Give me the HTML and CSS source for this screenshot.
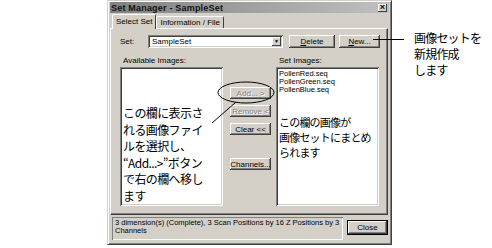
FILE: index.html
```html
<!DOCTYPE html>
<html lang="ja">
<head>
    <meta charset="UTF-8" />
    <title>Set Manager - SampleSet</title>
    <link rel="stylesheet" href="styles.css">
</head>
<body>

<div class="page">
    <!-- ダイアログ本体 -->
    <div class="dialog">
        <div class="titlebar">
            <span class="title">Set Manager - SampleSet</span>
            <span class="close-x">×</span>
        </div>

        <div class="tabs">
            <div class="tab active">Select Set</div>
            <div class="tab">Information / File</div>
        </div>

        <div class="panel">
            <div class="set-row">
                <span class="set-label">Set:</span>
                <div class="combo">
                    <span class="combo-text">SampleSet</span>
                    <span class="combo-btn">▼</span>
                </div>
                <button class="btn btn-delete"><u>D</u>elete</button>
                <button class="btn btn-new"><u>N</u>ew...</button>
            </div>

            <div class="lists">
                <div class="col">
                    <div class="list-label">Available Images:</div>
                    <div class="listbox">
                        <p class="note">この欄に表示さ<br>れる画像ファイ<br>ルを選択し、<br>“Add...>”ボタン<br>で右の欄へ移し<br>ます</p>
                    </div>
                </div>

                <div class="mid">
                    <button class="btn mid-btn disabled">Add... &gt;</button>
                    <button class="btn mid-btn disabled">Remove &lt;</button>
                    <button class="btn mid-btn">Clear &lt;&lt;</button>
                    <button class="btn mid-btn channels">Channels...</button>
                </div>

                <div class="col">
                    <div class="list-label">Set Images:</div>
                    <div class="listbox">
                        <div class="item">PollenRed.seq</div>
                        <div class="item">PollenGreen.seq</div>
                        <div class="item">PollenBlue.seq</div>
                        <p class="note note-right">この欄の画像が<br>画像セットにまとめ<br>られます</p>
                    </div>
                </div>
            </div>
        </div>

        <div class="bottom">
            <div class="status">3 dimension(s) (Complete), 3 Scan Positions by 16 Z Positions by 3 Channels</div>
            <button class="btn btn-close">Close</button>
        </div>
    </div>

    <!-- 右側の説明 -->
    <p class="callout">画像セットを<br>新規作成<br>します</p>
</div>

<!-- 引き出し線と楕円 -->
<svg class="marks" width="492" height="248" viewBox="0 0 492 248">
    <ellipse cx="246" cy="92.5" rx="28" ry="10.5" fill="none" stroke="#000" stroke-width="1"/>
    <line x1="236" y1="102" x2="212" y2="123" stroke="#000" stroke-width="1"/>
    <line x1="373" y1="39.5" x2="404" y2="39.5" stroke="#000" stroke-width="1"/>
</svg>

</body>
</html>
```

FILE: styles.css
```css
body {
    margin: 0;
    background: #fff;
    font-family: "Liberation Sans", Arial, sans-serif;
    font-size: 8px;
    color: #000;
}
.page {
    display: flex;
    align-items: flex-start;
    padding-left: 107px;
}
.dialog {
    width: 285px;
    height: 245px;
    box-sizing: border-box;
    background: #d4d0c8;
    border: 1px solid #404040;
    border-top-color: #d4d0c8;
    border-left-color: #d4d0c8;
    box-shadow: inset 1px 1px #fff, inset -1px -1px #808080;
    padding: 1px 2px;
    display: flex;
    flex-direction: column;
}
.titlebar {
    height: 11px;
    display: flex;
    align-items: center;
    justify-content: space-between;
    background: linear-gradient(to right, #808080, #c0c0c0);
    padding: 0 2px 0 1px;
}
.title {
    font-weight: bold;
    font-size: 9px;
    letter-spacing: 0.2px;
    color: #111;
}
.close-x {
    width: 9px;
    height: 8px;
    line-height: 7px;
    text-align: center;
    font-size: 9px;
    font-weight: bold;
    background: #d4d0c8;
    box-shadow: inset -1px -1px #404040, inset 1px 1px #fff;
}
.tabs {
    display: flex;
    margin-top: 2px;
    padding-left: 2px;
    height: 13px;
    align-items: flex-end;
}
.tab {
    height: 11px;
    line-height: 11px;
    padding: 0 3px;
    border: 1px solid #fff;
    border-bottom: none;
    border-right-color: #404040;
    border-radius: 2px 2px 0 0;
}
.tab.active {
    height: 13px;
    line-height: 13px;
    position: relative;
    z-index: 1;
    background: #d4d0c8;
    margin-bottom: -1px;
    padding: 0 3px 1px;
}
.panel {
    height: 187px;
    box-sizing: border-box;
    border: 1px solid #fff;
    border-right-color: #404040;
    border-bottom-color: #404040;
    box-shadow: inset -1px -1px #808080;
    margin-right: 1px;
    padding: 6px 0 0 9px;
}
.set-row {
    display: flex;
    align-items: center;
    height: 13px;
}
.set-label {
    width: 28px;
}
.combo {
    width: 135px;
    height: 13px;
    box-sizing: border-box;
    background: #fff;
    box-shadow: inset 1px 1px #808080, inset -1px -1px #fff, inset 2px 2px #404040, inset -2px -2px #d4d0c8;
    display: flex;
    align-items: center;
    justify-content: space-between;
    padding: 0 2px 0 4px;
}
.combo-btn {
    width: 9px;
    height: 9px;
    font-size: 5px;
    line-height: 9px;
    text-align: center;
    background: #d4d0c8;
    box-shadow: inset -1px -1px #404040, inset 1px 1px #fff;
}
.btn {
    font-family: inherit;
    font-size: 8px;
    color: #000;
    background: #d4d0c8;
    border: none;
    padding: 0;
    height: 13px;
    box-shadow: inset -1px -1px #404040, inset 1px 1px #fff, inset -2px -2px #808080;
}
.btn-delete {
    width: 46px;
    margin-left: 6px;
}
.btn-new {
    width: 41px;
    margin-left: 4px;
}
.lists {
    display: flex;
    margin-top: 8px;
}
.col {
    width: 103px;
}
.list-label {
    height: 10px;
    padding-left: 3px;
    margin-bottom: 1px;
}
.listbox {
    height: 139px;
    box-sizing: border-box;
    background: #fff;
    box-shadow: inset 1px 1px #808080, inset -1px -1px #fff, inset 2px 2px #404040, inset -2px -2px #d4d0c8;
    padding: 3px 3px;
}
.item {
    font-size: 7.5px;
    line-height: 8px;
}
.note {
    margin: 35px 0 0 0;
    font-family: "Noto Sans CJK JP", sans-serif;
    font-size: 12px;
    line-height: 16.6px;
    letter-spacing: -0.6px;
    white-space: nowrap;
}
.note-right {
    margin-top: 21px;
    font-size: 11px;
    line-height: 15px;
    letter-spacing: -0.8px;
}
.mid {
    width: 41px;
    margin: 0 5px 0 7px;
    padding-top: 31px;
    display: flex;
    flex-direction: column;
    gap: 6px;
}
.mid-btn {
    width: 41px;
    height: 12px;
}
.disabled {
    color: #808080;
    text-shadow: 1px 1px #fff;
}
.channels {
    margin-top: 17px;
}
.bottom {
    display: flex;
    align-items: flex-start;
    margin-top: 2px;
    padding-left: 2px;
}
.status {
    width: 231px;
    height: 23px;
    box-sizing: border-box;
    padding: 2px 3px;
    font-size: 7.5px;
    line-height: 8px;
    box-shadow: inset 1px 1px #808080, inset -1px -1px #fff;
}
.btn-close {
    width: 39px;
    margin: 4px 0 0 5px;
    box-shadow: 0 0 0 1px #000, inset -1px -1px #404040, inset 1px 1px #fff, inset -2px -2px #808080;
}
.callout {
    margin: 30px 0 0 22px;
    font-family: "Noto Sans CJK JP", sans-serif;
    font-size: 12px;
    line-height: 16px;
    letter-spacing: -0.8px;
    white-space: nowrap;
}
.marks {
    position: absolute;
    top: 0;
    left: 0;
    pointer-events: none;
}
```
